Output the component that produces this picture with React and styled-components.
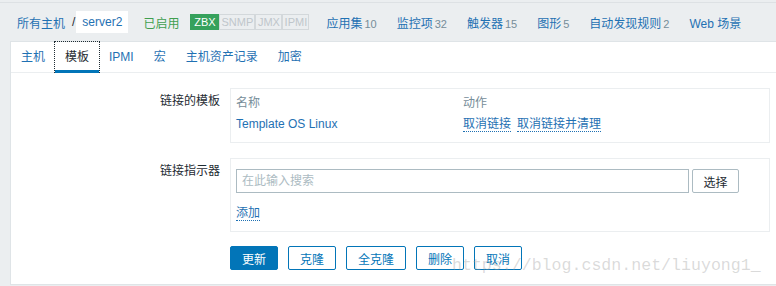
import React from 'react';
import styled, { createGlobalStyle } from 'styled-components';

const GlobalStyle = createGlobalStyle`
  html, body {
    margin: 0;
    padding: 0;
    background: #ebeef0;
  }
  body {
    font-family: "Liberation Sans", Arial, "Noto Sans CJK SC", sans-serif;
    font-size: 12px;
    color: #1f2c33;
  }
`;

const Page = styled.div`
  position: relative;
  width: 776px;
  height: 286px;
  overflow: hidden;
  box-sizing: border-box;
  padding-top: 2px;
`;

const Header = styled.div`
  display: flex;
  align-items: center;
  height: 39px;
  border-top: 1px solid #dde1e4;
  box-sizing: border-box;
  padding-left: 17px;
  white-space: nowrap;
  & > * {
    flex-shrink: 0;
  }
`;

const Crumb = styled.a`
  color: #1f71b3;
  text-decoration: none;
`;

const Slash = styled.span`
  margin: 0 1px 0 7px;
  color: #1f2c33;
`;

const Current = styled.span`
  background: #fff;
  color: #1f71b3;
  height: 22px;
  line-height: 22px;
  padding: 0 6px;
`;

const Status = styled.span`
  color: #3f9f4f;
  margin-left: 15px;
  margin-right: 11px;
`;

const Badges = styled.span`
  display: flex;
  margin-right: 7px;
`;

const Badge = styled.span`
  width: ${p => p.$w}px;
  box-sizing: border-box;
  text-align: center;
  font-size: 11px;
  line-height: 14px;
  border: 1px solid ${p => (p.$on ? '#36a15c' : '#d3d8db')};
  background: ${p => (p.$on ? '#36a15c' : '#ebeef0')};
  color: ${p => (p.$on ? '#fff' : '#bfc6cb')};
`;

const NavItem = styled.a`
  color: #1f71b3;
  text-decoration: none;
  padding: 0 10px;
`;

const Count = styled.span`
  color: #768d99;
  font-size: 11px;
  margin-left: 2px;
`;

const Panel = styled.div`
  margin-left: 10px;
  margin-right: -10px;
  background: #fff;
  border: 1px solid #dfe4e7;
  height: 244px;
  box-sizing: border-box;
`;

const Tabs = styled.div`
  display: flex;
  height: 30px;
  border-bottom: 1px solid #ebeef0;
`;

const Tab = styled.div`
  position: relative;
  height: 30px;
  box-sizing: border-box;
  padding: 2px 10px 0;
  line-height: 27px;
  color: ${p => (p.$active ? '#1f2c33' : '#1f71b3')};
  outline: ${p => (p.$active ? '1px dotted #1f2c33' : 'none')};
  &::after {
    content: '';
    display: ${p => (p.$active ? 'block' : 'none')};
    position: absolute;
    left: 0;
    right: 0;
    bottom: -1px;
    height: 3px;
    background: #0275b8;
  }
`;

const Form = styled.div`
  padding-top: 15px;
  display: flex;
  flex-direction: column;
  gap: 15px;
`;

const Row = styled.div`
  display: grid;
  grid-template-columns: 209px 540px;
  column-gap: 10px;
  align-items: start;
`;

const Label = styled.div`
  text-align: right;
  padding-top: 6px;
  line-height: 14px;
`;

const Box = styled.div`
  width: 540px;
  box-sizing: border-box;
  border: 1px solid #ebeef0;
  padding: 0 5px;
`;

const LinkedTable = styled.div`
  display: grid;
  grid-template-columns: 227px 1fr;
  padding-bottom: 10px;
`;

const Th = styled.div`
  color: #768d99;
  line-height: 14px;
  padding: 7px 0 5px;
`;

const Td = styled.div`
  line-height: 16px;
  height: 16px;
  padding-top: 1px;
  display: flex;
  align-items: center;
  gap: 6px;
`;

const TextLink = styled.a`
  color: #1f71b3;
  text-decoration: none;
`;

const DottedLink = styled.a`
  color: #1f71b3;
  text-decoration: none;
  border-bottom: 1px dotted #1f71b3;
  line-height: 14px;
`;

const SearchRow = styled.div`
  display: flex;
  gap: 3px;
  padding-top: 10px;
`;

const Search = styled.div`
  width: 453px;
  height: 24px;
  box-sizing: border-box;
  border: 1px solid #acbbc2;
  color: #acbbc2;
  line-height: 22px;
  padding-left: 5px;
`;

const SelectButton = styled.button`
  width: 47px;
  height: 24px;
  border: 1px solid #acbbc2;
  border-radius: 2px;
  background: #fff;
  color: #1f2c33;
  font: inherit;
  padding: 0;
`;

const AddLine = styled.div`
  display: flex;
  height: 16px;
  align-items: center;
  padding: 12px 0 10px;
`;

const Buttons = styled.div`
  display: flex;
  gap: 10px;
  margin-left: 219px;
  margin-top: -1px;
`;

const Button = styled.button`
  height: 24px;
  padding: 0 11px;
  border: 1px solid #0275b8;
  border-radius: 2px;
  background: ${p => (p.$primary ? '#0275b8' : '#fff')};
  color: ${p => (p.$primary ? '#fff' : '#0275b8')};
  font: inherit;
`;

const Watermark = styled.div`
  position: absolute;
  left: 452px;
  top: 256px;
  font-family: "Liberation Mono", monospace;
  font-size: 16.6px;
  line-height: 20px;
  color: rgba(150, 150, 150, 0.35);
  white-space: nowrap;
  pointer-events: none;
`;

const badges = [
  ['ZBX', 29, true],
  ['SNMP', 36, false],
  ['JMX', 27, false],
  ['IPMI', 27, false]
];

const navItems = [
  ['应用集', 10],
  ['监控项', 32],
  ['触发器', 15],
  ['图形', 5],
  ['自动发现规则', 2],
  ['Web 场景', null]
];

const tabs = ['主机', '模板', 'IPMI', '宏', '主机资产记录', '加密'];

export default function App() {
  return (
    <Page>
      <GlobalStyle />
      <Header>
        <Crumb>所有主机</Crumb>
        <Slash>/</Slash>
        <Current>server2</Current>
        <Status>已启用</Status>
        <Badges>
          {badges.map(([name, w, on]) => (
            <Badge key={name} $w={w} $on={on}>{name}</Badge>
          ))}
        </Badges>
        {navItems.map(([name, count]) => (
          <NavItem key={name}>
            {name}
            {count !== null && <Count>{count}</Count>}
          </NavItem>
        ))}
      </Header>
      <Panel>
        <Tabs>
          {tabs.map(t => (
            <Tab key={t} $active={t === '模板'}>{t}</Tab>
          ))}
        </Tabs>
        <Form>
          <Row>
            <Label>链接的模板</Label>
            <Box>
              <LinkedTable>
                <Th>名称</Th>
                <Th>动作</Th>
                <Td><TextLink>Template OS Linux</TextLink></Td>
                <Td>
                  <DottedLink>取消链接</DottedLink>
                  <DottedLink>取消链接并清理</DottedLink>
                </Td>
              </LinkedTable>
            </Box>
          </Row>
          <Row>
            <Label>链接指示器</Label>
            <Box>
              <SearchRow>
                <Search>在此输入搜索</Search>
                <SelectButton>选择</SelectButton>
              </SearchRow>
              <AddLine>
                <DottedLink>添加</DottedLink>
              </AddLine>
            </Box>
          </Row>
          <Buttons>
            <Button $primary>更新</Button>
            <Button>克隆</Button>
            <Button>全克隆</Button>
            <Button>删除</Button>
            <Button>取消</Button>
          </Buttons>
        </Form>
      </Panel>
      <Watermark>https://blog.csdn.net/liuyong1_</Watermark>
    </Page>
  );
}
